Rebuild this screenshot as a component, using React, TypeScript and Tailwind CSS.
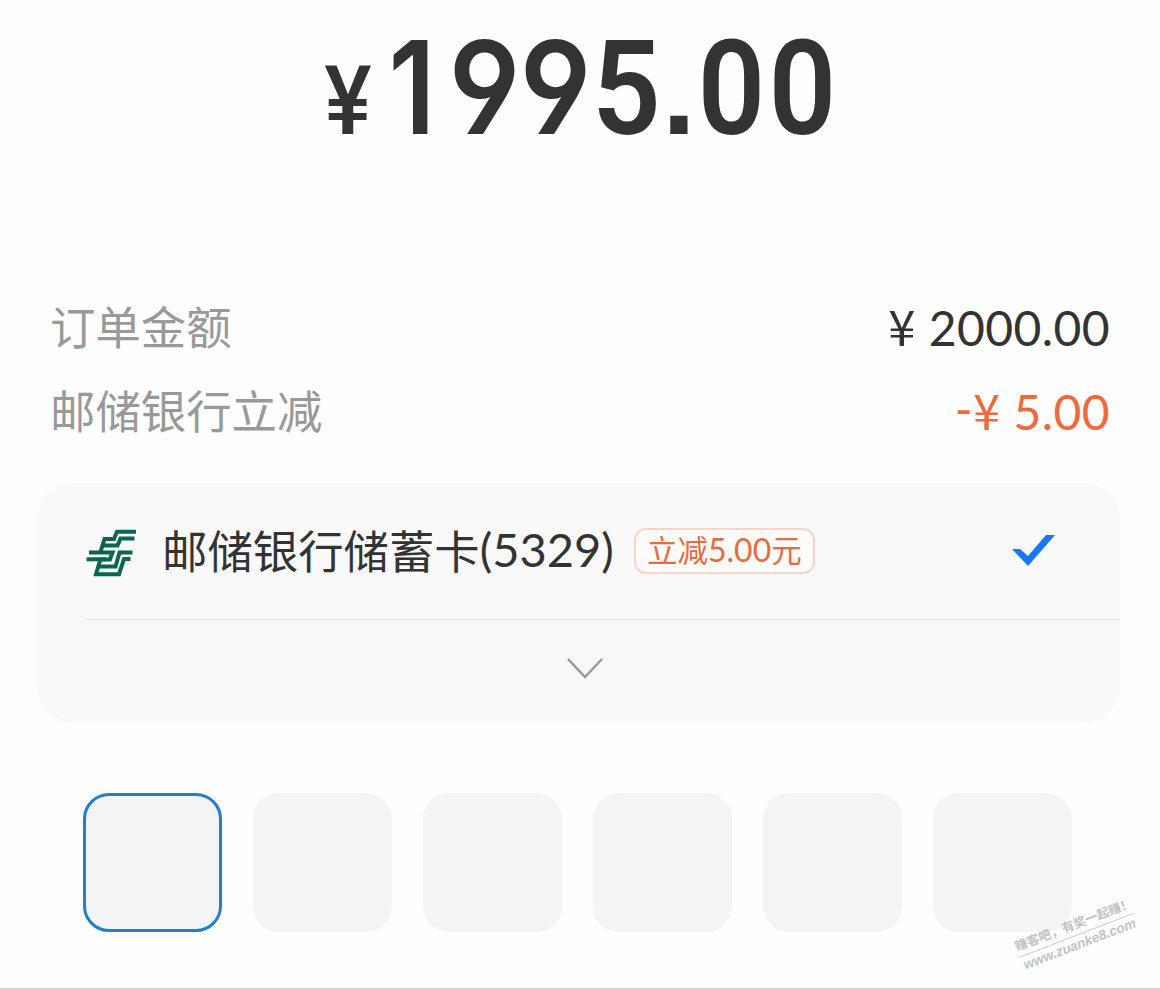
import { clsx } from 'clsx'

const nine = "w-[71px] font-['Inter',sans-serif] text-[129px] [font-feature-settings:'cv04'] scale-x-[0.92]"
const zero = 'w-[71px] scale-x-[0.9]'

const amountDigits = [
  { char: '1', className: "mr-[7px] w-[60px] font-['Inter',sans-serif] text-[129px] scale-x-[0.86]" },
  { char: '9', className: nine },
  { char: '9', className: nine },
  { char: '5', className: 'w-[71px] scale-x-[0.92]' },
  { char: '.', className: "w-[34px] font-['Liberation_Sans',sans-serif] text-[122px]" },
  { char: '0', className: zero },
  { char: '0', className: zero },
]

const rows = [
  { label: '订单金额', sign: '', value: '2000.00', color: 'text-[#333333]' },
  { label: '邮储银行立减', sign: '-', value: '5.00', color: 'text-[#ee6a3c]' },
]

const tiles = [0, 1, 2, 3, 4, 5]

function BankLogo() {
  return (
    <svg className="overflow-visible" width="50" height="48" viewBox="0 0 50 48" fill="none" stroke="#09664f" strokeWidth="4">
      <path d="M50 4.8H31L28 12H18.5L14.5 25" />
      <path d="M48.5 11.4H34.5L31.5 18.6H17" />
      <path d="M3 25.5H26.5L24 32.5H13.5" />
      <path d="M0.5 32.3H20" />
      <path d="M46.5 25.5H33.5L29.5 39.5H13" />
      <path d="M44.5 32H38L33 47.2H10L14.5 32" />
    </svg>
  )
}

export default function App() {
  return (
    <div className="relative h-[989px] w-[1160px] overflow-hidden border-b border-[#cfcfcf] bg-[#fefefe] font-['Lato','Noto_Sans_CJK_SC',sans-serif] text-[#333333]">
      <div className="flex h-[155px] items-end pl-[325px] font-['Roboto',sans-serif] text-[131px] leading-none font-semibold">
        <span className="mb-[5px] flex w-[46px] scale-x-[0.92] justify-center text-[97px] leading-[1] font-medium">¥</span>
        <div className="ml-[11px] flex items-baseline">
          {amountDigits.map((d, i) => (
            <span key={i} className={clsx('flex justify-center', d.className)}>
              {d.char}
            </span>
          ))}
        </div>
      </div>

      <div className="mt-[131px] pr-[50px] pl-[50px]">
        {rows.map((row) => (
          <div key={row.label} className="flex h-[84px] items-center justify-between text-[45.4px] leading-none">
            <span className="pb-[4px] font-['Noto_Sans_CJK_SC',sans-serif] text-[#999999]">{row.label}</span>
            <span className={clsx('flex items-center text-[48px]', row.color)}>
              <span className="pb-[7px]">{row.sign}</span>
              <span className="mr-[13px] flex w-[28px] justify-center pb-[7px] font-['Noto_Sans_CJK_SC',sans-serif] text-[49px]">
                ¥
              </span>
              <span className="tracking-[0.4px]">{row.value}</span>
            </span>
          </div>
        ))}
      </div>

      <div className="mt-[29px] ml-[37px] h-[240px] w-[1083px] rounded-[36px] bg-[#f9f9fa]">
        <div className="ml-[49px] flex h-[137px] items-center border-b border-[#e2e2e2]">
          <BankLogo />
          <span className="ml-[26px] flex items-center pb-[3px] font-['Noto_Sans_CJK_SC',sans-serif] text-[45.4px] leading-none">
            邮储银行储蓄卡
            <span className="font-['Lato','Noto_Sans_CJK_SC',sans-serif] text-[47px]">(5329)</span>
          </span>
          <span className="ml-[20px] flex h-[46px] w-[181px] items-center justify-center rounded-[12px] border-2 border-[#f8d5c8] bg-[#fefcfb] pb-[4px] font-['Noto_Sans_CJK_SC',sans-serif] text-[30.5px] leading-none text-[#e96a3e]">
            立减
            <span className="pt-[2px] font-['Lato',sans-serif] text-[32px]">5.00</span>
            元
          </span>
          <svg className="mr-[65px] ml-auto" width="44" height="32" viewBox="0 0 44 32">
            <path d="M1 14H9L17 21L35 0H44L17 31Z" fill="#1677ff" />
          </svg>
        </div>
        <div className="flex h-[98px] items-center justify-center pl-3">
          <svg width="38" height="22" viewBox="0 0 38 22" fill="none" stroke="#999999" strokeWidth="2.5">
            <path d="M2 1L19 19L36 1" />
          </svg>
        </div>
      </div>

      <div className="mt-[70px] ml-[83px] flex gap-[31px]">
        {tiles.map((i) => (
          <div
            key={i}
            className={clsx(
              'h-[139px] w-[139px] rounded-[26px] bg-[#f4f4f4]',
              i === 0 && 'border-[3px] border-[#247dcf]',
            )}
          />
        ))}
      </div>

      {/* site watermark over the corner */}
      <div className="absolute top-[918px] left-[1015px] w-[122px] -rotate-[21deg] text-center leading-none text-[#c2c2c2]">
        <div className="border-b border-[#d0d0d0] pb-1 font-['Noto_Sans_CJK_SC',sans-serif] text-[12.5px] font-bold whitespace-nowrap">
          赚客吧，有奖一起赚！
        </div>
        <div className="pt-0.5 font-['Liberation_Sans',sans-serif] text-[13.5px] font-bold italic">www.zuanke8.com</div>
      </div>
    </div>
  )
}
